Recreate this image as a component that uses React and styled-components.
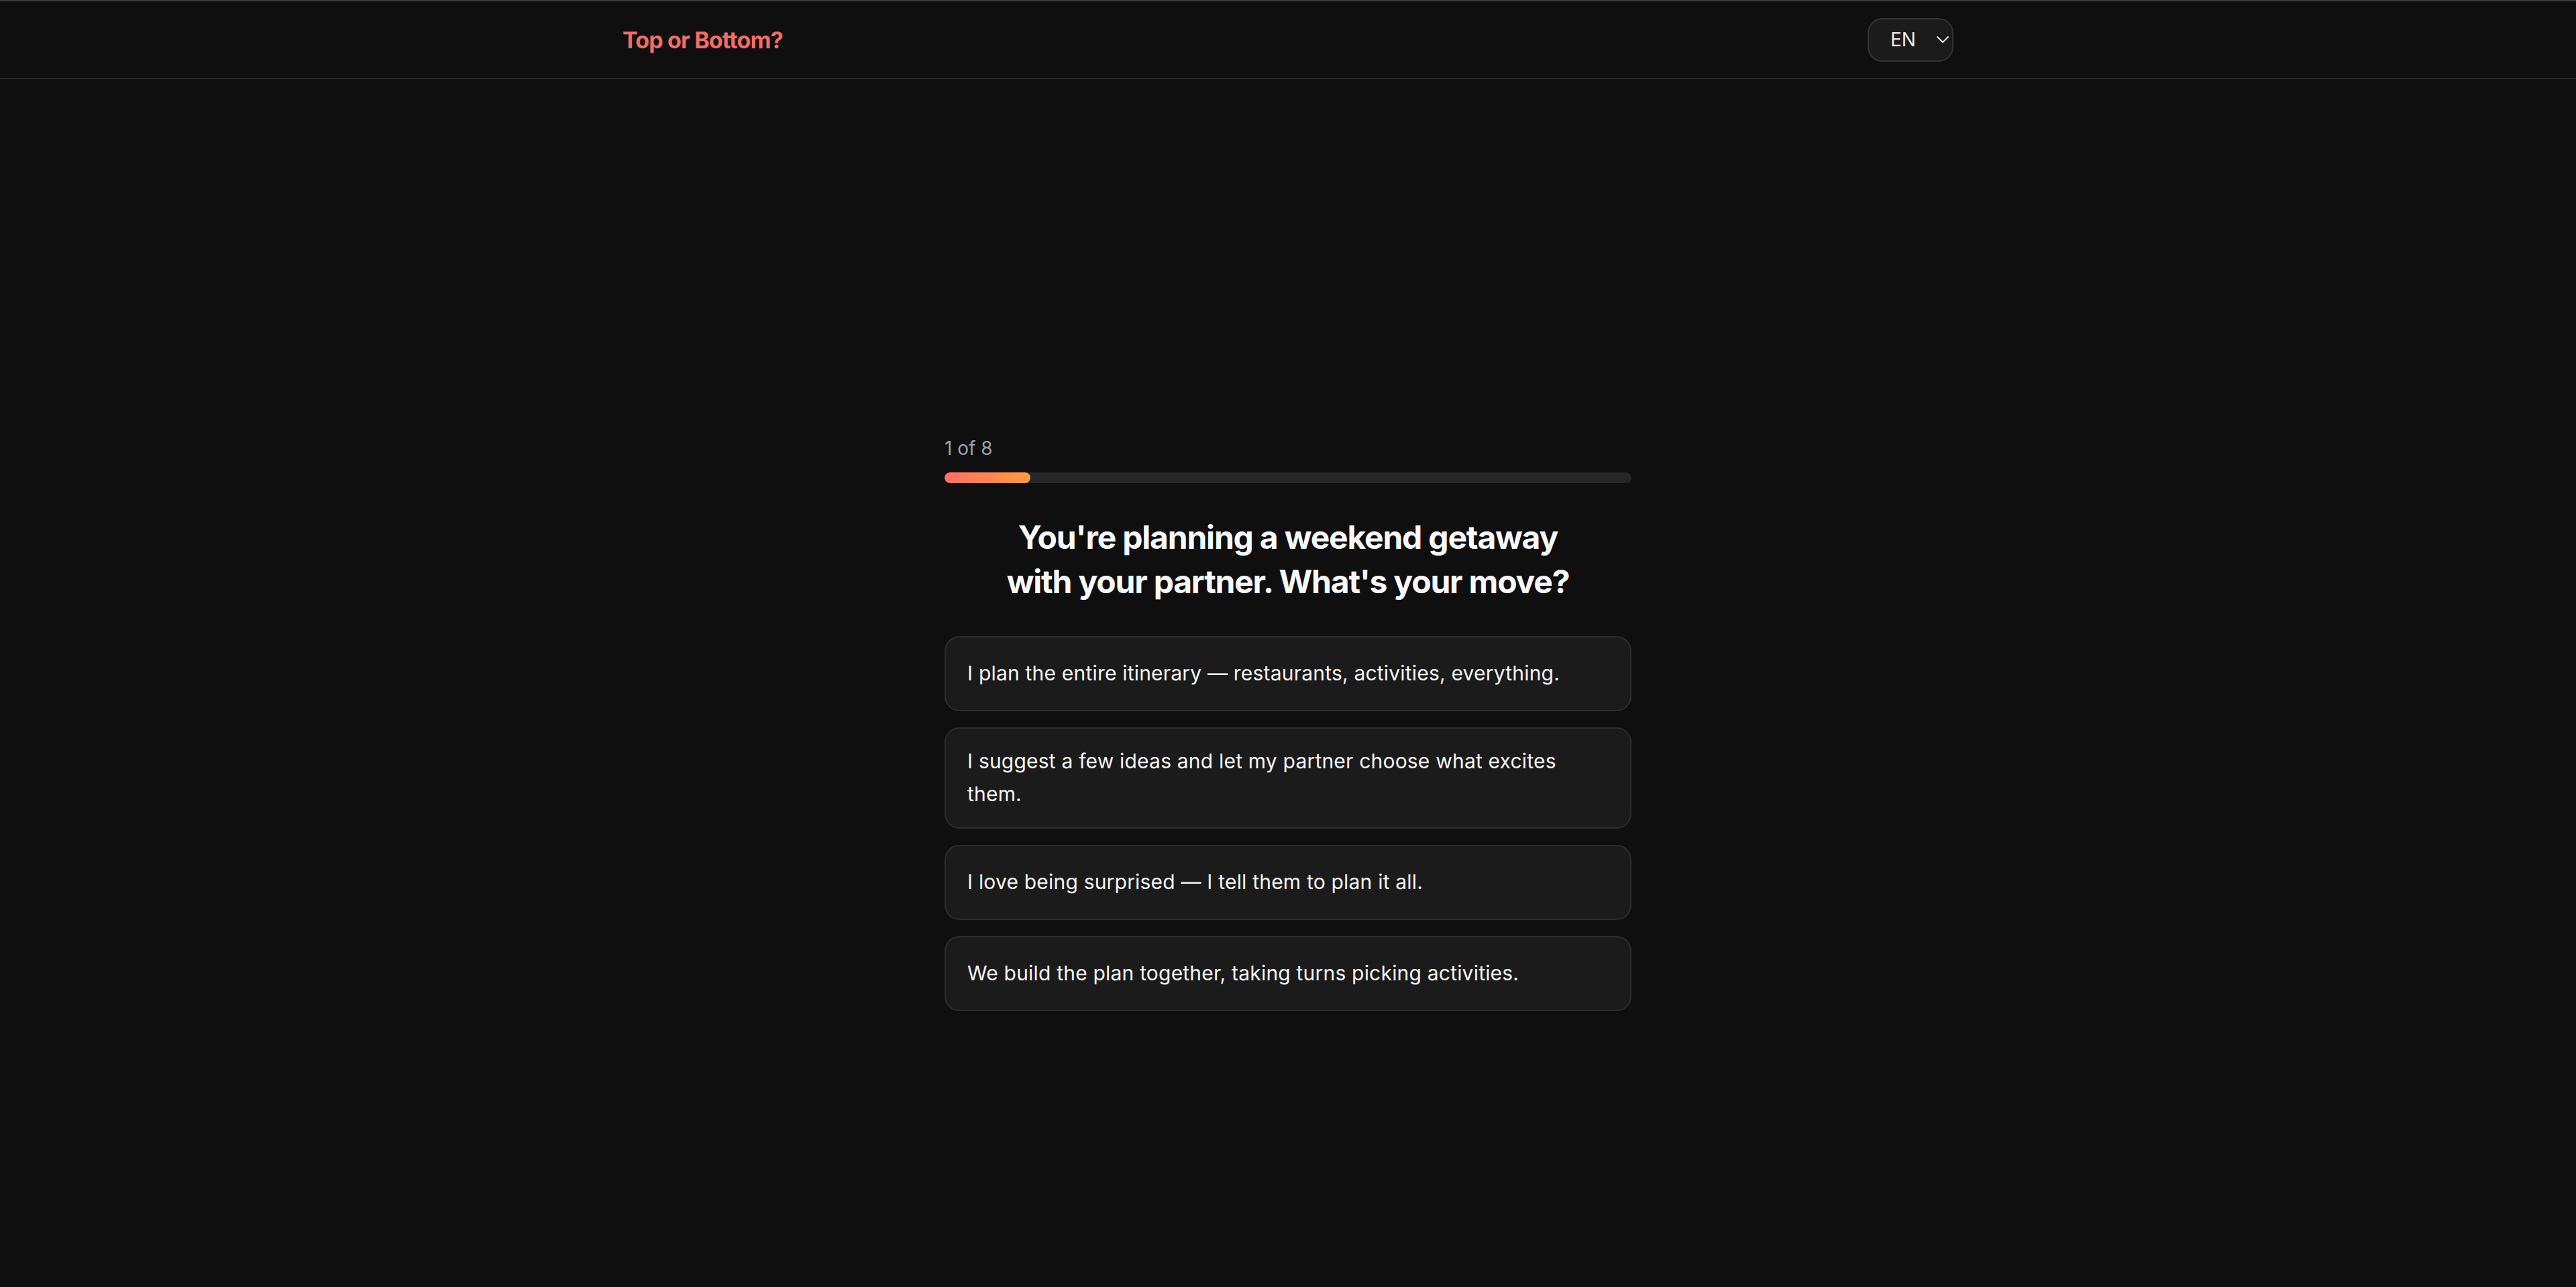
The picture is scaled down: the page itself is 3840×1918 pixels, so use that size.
import React from "react";
import styled, { createGlobalStyle } from "styled-components";

const Global = createGlobalStyle`
  * { box-sizing: border-box; }
  html, body { margin: 0; padding: 0; background: #0f0f0f; }
  body { font-family: Inter, "Noto Sans", sans-serif; color: #f5f5f5; }
`;

const Page = styled.div`
  min-height: 100vh;
  background: #0f0f0f;
`;

const Header = styled.header`
  border-top: 2px solid #3a3a3a;
  border-bottom: 2px solid #262626;
  height: 118px;
`;

const HeaderInner = styled.div`
  max-width: 2048px;
  height: 100%;
  margin: 0 auto;
  padding: 0 32px;
  display: flex;
  align-items: center;
  justify-content: space-between;
`;

const Logo = styled.div`
  font-size: 34px;
  font-weight: 700;
  color: #f76c63;
  letter-spacing: -0.85px;
`;

const LangSelect = styled.div`
  width: 128px;
  height: 65px;
  border: 2px solid #333333;
  border-radius: 22px;
  background: #1b1b1b;
  display: flex;
  align-items: center;
  padding: 0 4px 0 32px;
  justify-content: space-between;
  font-size: 28px;
  color: #ececec;
`;

const Main = styled.main`
  min-height: 100vh;
  display: flex;
  align-items: center;
  justify-content: center;
`;

const Quiz = styled.div`
  width: 1024px;
  display: flex;
  flex-direction: column;
`;

const Counter = styled.div`
  font-size: 28px;
  line-height: 40px;
  color: #9ca3af;
  margin-bottom: 16px;
`;

const Track = styled.div`
  height: 16px;
  border-radius: 8px;
  background: #262626;
  overflow: hidden;
  margin-bottom: 48px;
`;

const Fill = styled.div`
  height: 100%;
  border-radius: 8px;
  background: linear-gradient(90deg, #ff6f63, #ff9a3e);
`;

const Question = styled.h1`
  margin: 0 0 48px;
  font-size: 48px;
  line-height: 66px;
  font-weight: 700;
  text-align: center;
  color: #f8f9fb;
  text-wrap: balance;
  letter-spacing: -1.2px;
`;

const Options = styled.div`
  display: flex;
  flex-direction: column;
  gap: 24px;
`;

const Option = styled.button`
  min-height: 112px;
  display: flex;
  align-items: center;
  text-align: left;
  padding: 24px 32px;
  border: 2px solid #2c2c2c;
  border-radius: 22px;
  background: #1b1b1b;
  color: #f5f5f5;
  font-family: inherit;
  font-size: 30px;
  line-height: 1.65;
  letter-spacing: 0.2px;
  cursor: pointer;
`;

const Chevron = () => (
  <svg width="20" height="12" viewBox="0 0 20 12" fill="none">
    <path d="M2 2 L10 10 L18 2" stroke="#e5e5e5" strokeWidth="2" strokeLinecap="round" strokeLinejoin="round" />
  </svg>
);

const options = [
  "I plan the entire itinerary — restaurants, activities, everything.",
  "I suggest a few ideas and let my partner choose what excites them.",
  "I love being surprised — I tell them to plan it all.",
  "We build the plan together, taking turns picking activities.",
];

export default function App() {
  const step = 1;
  const total = 8;
  return (
    <Page>
      <Global />
      <Header>
        <HeaderInner>
          <Logo>Top or Bottom?</Logo>
          <LangSelect>
            <span>EN</span>
            <Chevron />
          </LangSelect>
        </HeaderInner>
      </Header>
      <Main>
        <Quiz>
          <Counter>{step} of {total}</Counter>
          <Track>
            <Fill style={{ width: `${(step / total) * 100}%` }} />
          </Track>
          <Question>You're planning a weekend getaway with your partner. What's your move?</Question>
          <Options>
            {options.map((o) => (
              <Option key={o}>{o}</Option>
            ))}
          </Options>
        </Quiz>
      </Main>
    </Page>
  );
}
